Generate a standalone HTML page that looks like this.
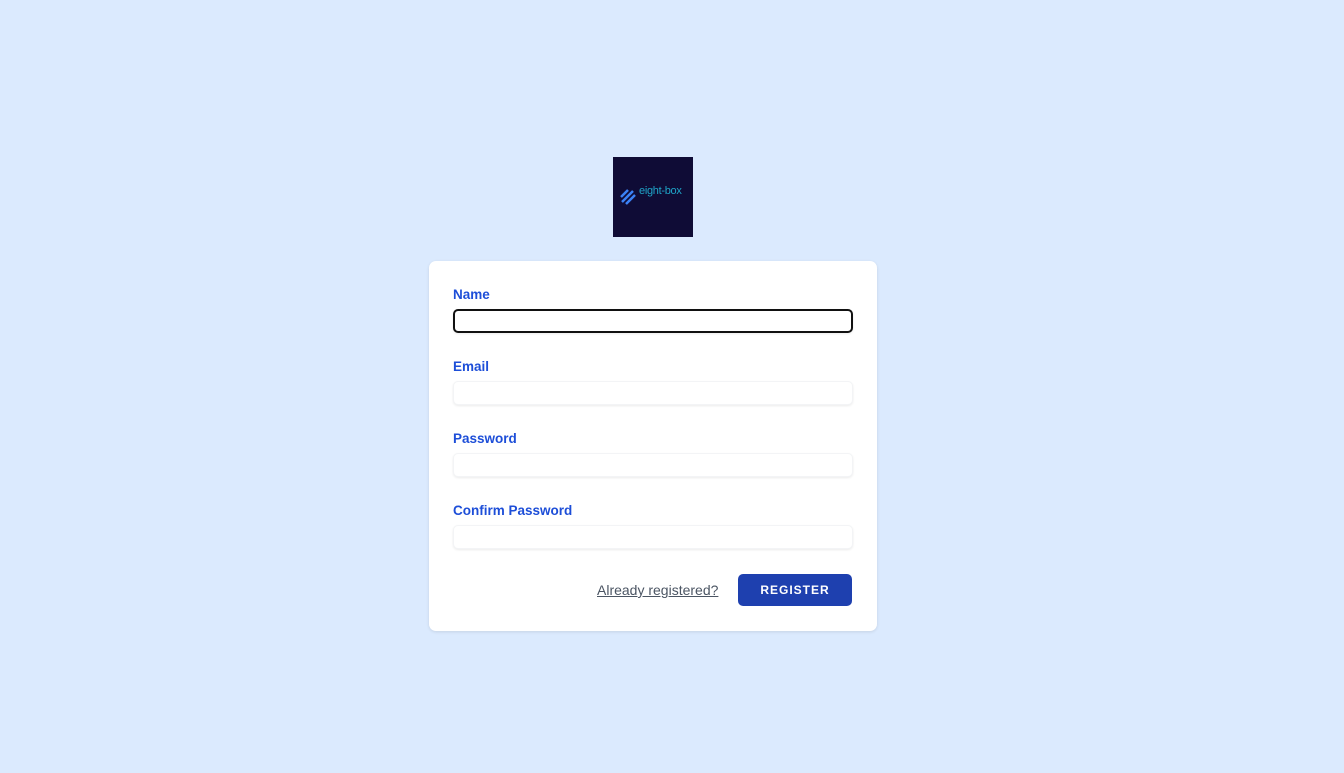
<!DOCTYPE html>
<html><head><style>
body{margin:0;background:#dbeafe;font-family:"Liberation Sans","DejaVu Sans",sans-serif;width:1344px;height:773px;position:relative;overflow:hidden}
.logo{position:absolute;left:613px;top:157px;width:80px;height:80px;background:#0f0c36}
.logo span{position:absolute;left:26px;top:28px;color:#1fa5c9;font-size:11px;letter-spacing:-0.3px}
.card{position:absolute;left:429px;top:261px;width:448px;height:370px;background:#fff;border-radius:7px;box-shadow:0 1px 3px rgba(0,0,0,.1)}
.lab{position:absolute;left:24px;color:#1d4ed8;font-size:13.5px;font-weight:bold}
.inp{position:absolute;left:24px;width:400px;height:24px;border-radius:5px;background:#fff;box-shadow:0 1px 2px rgba(0,0,0,.08);border:1px solid #f3f4f6;box-sizing:border-box}
.inp.f{border:2px solid #111;}
.link{position:absolute;left:168px;top:321px;font-size:14px;color:#4b5563;text-decoration:underline}
.btn{position:absolute;left:309px;top:313px;width:114px;height:32px;background:#1e40af;border-radius:5px;color:#fff;font-size:12px;font-weight:bold;letter-spacing:1px;text-align:center;line-height:32px}
</style></head><body>
<div class="logo"><svg style="position:absolute;left:7px;top:32px" width="16" height="16" viewBox="0 0 16 16"><g stroke="#3b82f6" stroke-width="2.5"><line x1="1" y1="8" x2="8" y2="1"/><line x1="2" y1="13" x2="13" y2="2"/><line x1="6" y1="15" x2="15" y2="6"/></g></svg><span>eight-box</span></div>
<div class="card">
<div class="lab" style="top:26px">Name</div><div class="inp f" style="top:48px"></div>
<div class="lab" style="top:98px">Email</div><div class="inp" style="top:120px"></div>
<div class="lab" style="top:170px">Password</div><div class="inp" style="top:192px"></div>
<div class="lab" style="top:242px">Confirm Password</div><div class="inp" style="top:264px"></div>
<div class="link">Already registered?</div>
<div class="btn">REGISTER</div>
</div>
</body></html>
